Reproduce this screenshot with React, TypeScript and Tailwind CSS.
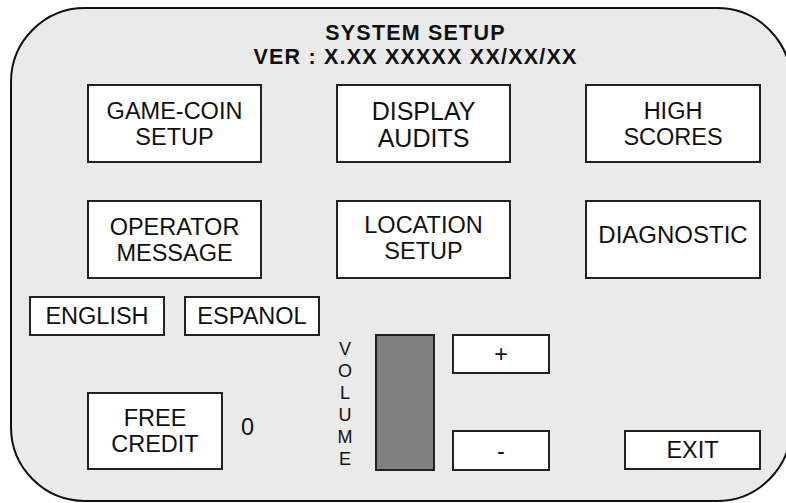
const font = { fontFamily: '"Liberation Sans", Arial, Helvetica, sans-serif' }

function Box({ children, className = '' }: { children: React.ReactNode; className?: string }) {
  return (
    <div
      className={`flex items-center justify-center text-center bg-white border-2 border-[#222] text-[#111] ${className}`}
    >
      {children}
    </div>
  )
}

const menu = [
  { label: ['GAME-COIN', 'SETUP'], size: 'text-[23.5px] leading-[26px]' },
  { label: ['DISPLAY', 'AUDITS'], size: 'text-[25px] leading-[27px] pt-[2px]' },
  { label: ['HIGH', 'SCORES'], size: 'text-[23.5px] leading-[26px]' },
  { label: ['OPERATOR', 'MESSAGE'], size: 'text-[23.5px] leading-[26px]' },
  { label: ['LOCATION', 'SETUP'], size: 'text-[23.5px] leading-[26px] pb-[3px]' },
  { label: ['DIAGNOSTIC'], size: 'text-[24px] leading-[26px] pb-[9px]' },
]

export default function App() {
  return (
    <div className="w-[786px] h-[503px] overflow-hidden bg-white" style={font}>
      <div className="ml-[10px] mt-[7px] w-[782px] h-[495px] rounded-[75px] border-2 border-[#111] bg-[#eaeaea]">
        {/* header */}
        <div className="pt-[12px] pl-[29px] text-center font-bold text-[21.5px] leading-[24px] tracking-[1.2px] text-[#111]">
          <div>SYSTEM SETUP</div>
          <div>VER : X.XX XXXXX XX/XX/XX</div>
        </div>

        {/* main menu */}
        <div className="mt-[15px] ml-[75px] grid grid-cols-[175px_175px_176px] auto-rows-[79px] gap-x-[74px] gap-y-[37px]">
          {menu.map((m) => (
            <Box key={m.label.join(' ')} className={m.size}>
              <div>
                {m.label.map((l) => (
                  <div key={l}>{l}</div>
                ))}
              </div>
            </Box>
          ))}
        </div>

        {/* language */}
        <div className="mt-[17px] ml-[17px] flex gap-[19px] text-[23.5px] leading-[26px]">
          <Box className="w-[136px] h-[40px]">ENGLISH</Box>
          <Box className="w-[136px] h-[40px]">ESPANOL</Box>
        </div>

        {/* bottom controls */}
        <div className="mt-[-2px] flex items-start text-[23.5px] leading-[26px] text-[#111]">
          <Box className="ml-[75px] mt-[58px] w-[136px] h-[78px]">
            <div>
              <div>FREE</div>
              <div>CREDIT</div>
            </div>
          </Box>
          <div className="ml-[18px] mt-[80px] w-[14px]">0</div>
          <div className="ml-[80px] mt-[4px] w-[20px] flex flex-col items-center text-[18px] leading-[22px]">
            {'VOLUME'.split('').map((c, i) => (
              <span key={i}>{c}</span>
            ))}
          </div>
          <div className="ml-[20px] w-[60px] h-[137px] bg-[#808080] border-2 border-[#222]" />
          <div className="ml-[17px] flex flex-col gap-[56px]">
            <Box className="w-[98px] h-[40px]">+</Box>
            <Box className="w-[98px] h-[41px]">-</Box>
          </div>
          <Box className="ml-[74px] mt-[96px] w-[137px] h-[40px]">EXIT</Box>
        </div>
      </div>
    </div>
  )
}
